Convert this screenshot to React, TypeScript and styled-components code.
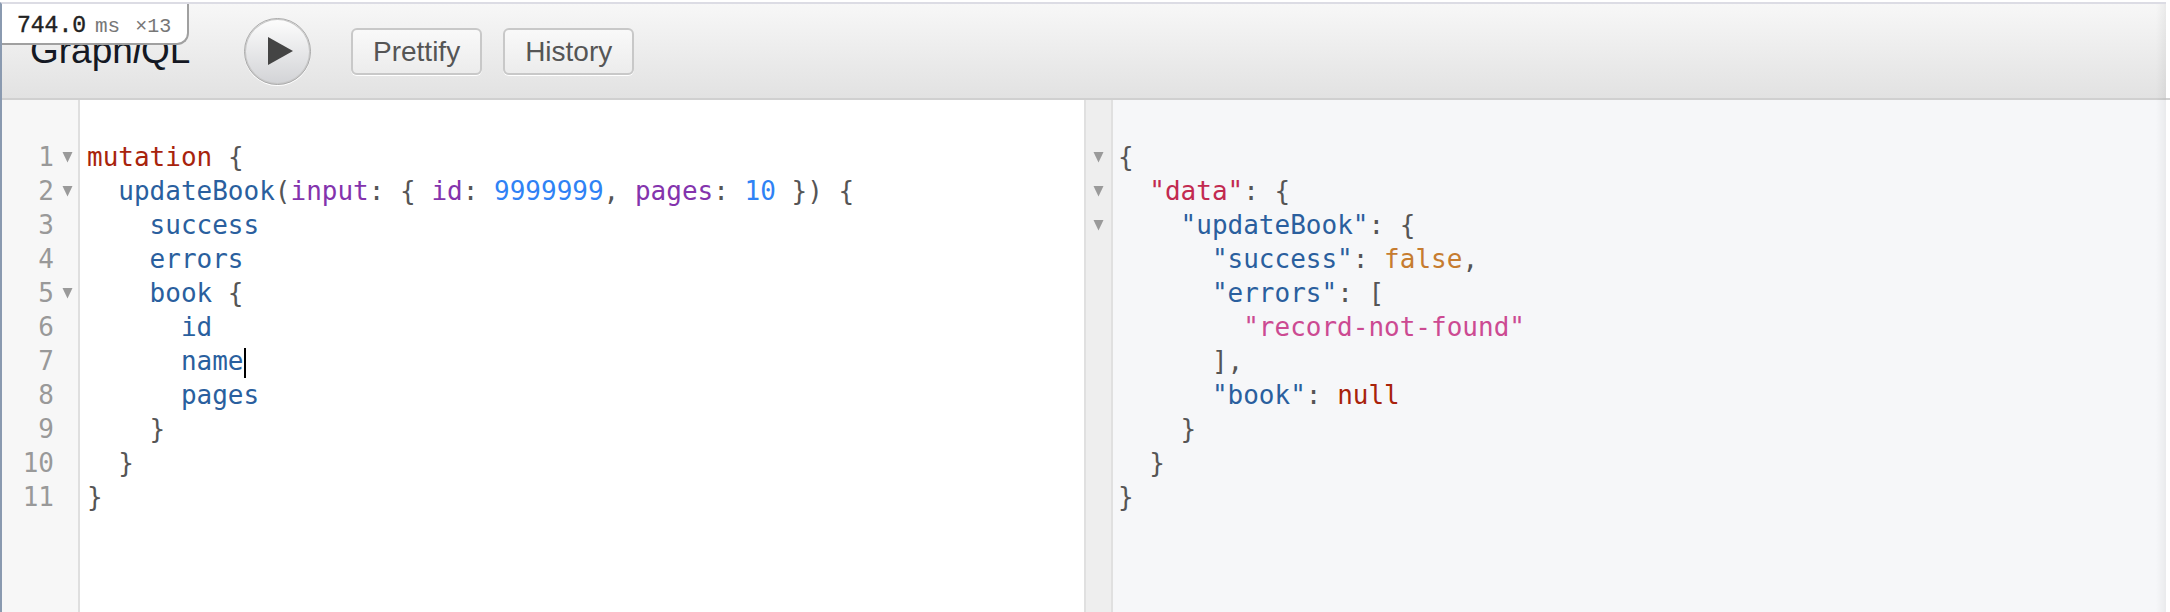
import styled, { createGlobalStyle } from "styled-components";

const GlobalStyle = createGlobalStyle`
  html, body {
    margin: 0;
    height: 100%;
    background: #fff;
    overflow: hidden;
  }
  #root {
    height: 100%;
  }
`;

const tokenColors: Record<string, string> = {
  keyword: "#a8230c",
  field: "#2a5f9e",
  arg: "#8433ad",
  number: "#2f82f5",
  punct: "#555",
  jsonKey: "#c22a50",
  boolean: "#c67c30",
  string: "#cc4a92",
};

type Token = [keyof typeof tokenColors, string];

const queryLines: { indent: number; tokens: Token[]; fold?: boolean; cursor?: boolean }[] = [
  { indent: 0, fold: true, tokens: [["keyword", "mutation"], ["punct", " {"]] },
  {
    indent: 1,
    fold: true,
    tokens: [
      ["field", "updateBook"],
      ["punct", "("],
      ["arg", "input"],
      ["punct", ": { "],
      ["arg", "id"],
      ["punct", ": "],
      ["number", "9999999"],
      ["punct", ", "],
      ["arg", "pages"],
      ["punct", ": "],
      ["number", "10"],
      ["punct", " }) {"],
    ],
  },
  { indent: 2, tokens: [["field", "success"]] },
  { indent: 2, tokens: [["field", "errors"]] },
  { indent: 2, fold: true, tokens: [["field", "book"], ["punct", " {"]] },
  { indent: 3, tokens: [["field", "id"]] },
  { indent: 3, cursor: true, tokens: [["field", "name"]] },
  { indent: 3, tokens: [["field", "pages"]] },
  { indent: 2, tokens: [["punct", "}"]] },
  { indent: 1, tokens: [["punct", "}"]] },
  { indent: 0, tokens: [["punct", "}"]] },
];

const resultLines: { indent: number; tokens: Token[]; fold?: boolean }[] = [
  { indent: 0, fold: true, tokens: [["punct", "{"]] },
  { indent: 1, fold: true, tokens: [["jsonKey", "\"data\""], ["punct", ": {"]] },
  { indent: 2, fold: true, tokens: [["field", "\"updateBook\""], ["punct", ": {"]] },
  { indent: 3, tokens: [["field", "\"success\""], ["punct", ": "], ["boolean", "false"], ["punct", ","]] },
  { indent: 3, tokens: [["field", "\"errors\""], ["punct", ": ["]] },
  { indent: 4, tokens: [["string", "\"record-not-found\""]] },
  { indent: 3, tokens: [["punct", "],"]] },
  { indent: 3, tokens: [["field", "\"book\""], ["punct", ": "], ["keyword", "null"]] },
  { indent: 2, tokens: [["punct", "}"]] },
  { indent: 1, tokens: [["punct", "}"]] },
  { indent: 0, tokens: [["punct", "}"]] },
];

function FoldArrow() {
  return (
    <svg width="11" height="12" viewBox="0 0 11 12">
      <path d="M0.5 1 L10.5 1 L5.5 11.5 Z" fill="#9a9a9a" />
    </svg>
  );
}

function PlayIcon() {
  return (
    <svg width="25" height="28" viewBox="0 0 25 28">
      <path d="M0 0 L25 14 L0 28 Z" fill="#444" />
    </svg>
  );
}

export default function App() {
  return (
    <Page>
      <GlobalStyle />
      <Frame>
        <Stats>
          <StatsValue>744.0</StatsValue>
          <StatsUnit>ms</StatsUnit>
          <StatsCount>×13</StatsCount>
        </Stats>
        <Toolbar>
          <Title>
            Graph<em>i</em>QL
          </Title>
          <ExecuteButton aria-label="Execute">
            <PlayIcon />
          </ExecuteButton>
          <ToolButton>Prettify</ToolButton>
          <ToolButton>History</ToolButton>
        </Toolbar>
        <Panes>
          <QueryPane>
            <QueryGutter>
              {queryLines.map((line, i) => (
                <GutterRow key={i}>
                  <LineNumber>{i + 1}</LineNumber>
                  <FoldSlot>{line.fold && <FoldArrow />}</FoldSlot>
                </GutterRow>
              ))}
            </QueryGutter>
            <Code>
              {queryLines.map((line, i) => (
                <CodeLine key={i} $indent={line.indent}>
                  {line.tokens.map(([kind, text], j) => (
                    <Tok key={j} $kind={kind}>
                      {text}
                    </Tok>
                  ))}
                  {line.cursor && <Cursor />}
                </CodeLine>
              ))}
            </Code>
          </QueryPane>
          <ResultPane>
            <ResultGutter>
              {resultLines.map((line, i) => (
                <ResultGutterRow key={i}>{line.fold && <FoldArrow />}</ResultGutterRow>
              ))}
            </ResultGutter>
            <ResultCode>
              {resultLines.map((line, i) => (
                <CodeLine key={i} $indent={line.indent}>
                  {line.tokens.map(([kind, text], j) => (
                    <Tok key={j} $kind={kind}>
                      {text}
                    </Tok>
                  ))}
                </CodeLine>
              ))}
            </ResultCode>
          </ResultPane>
        </Panes>
      </Frame>
    </Page>
  );
}

const Page = styled.div`
  height: 612px;
  width: 2170px;
  box-sizing: border-box;
  padding-top: 2px;
  padding-right: 4px;
  background: #fff;
`;

const Frame = styled.div`
  position: relative;
  height: 100%;
  display: flex;
  flex-direction: column;
  border-top: 2px solid #dcdce4;
  border-left: 2px solid #8a9ab0;
  box-sizing: border-box;
  &::after {
    content: "";
    position: absolute;
    top: 0;
    right: 0;
    bottom: 0;
    width: 10px;
    background: linear-gradient(to right, rgba(0, 0, 0, 0), rgba(0, 0, 0, 0.05));
  }
`;

const Stats = styled.div`
  position: absolute;
  top: 0;
  left: 0;
  box-sizing: border-box;
  width: 187px;
  height: 41px;
  display: flex;
  align-items: baseline;
  padding: 9px 0 0 15px;
  background: #fff;
  border: solid #a0a0a0;
  border-width: 0 2px 2px 0;
  border-bottom-right-radius: 12px;
  font-family: "Liberation Mono", monospace;
  z-index: 2;
`;

const StatsValue = styled.span`
  font-size: 23px;
  color: #222;
  -webkit-text-stroke: 0.4px #222;
`;

const StatsUnit = styled.span`
  font-size: 21px;
  color: #777;
  margin-left: 9px;
`;

const StatsCount = styled.span`
  font-size: 20px;
  color: #777;
  margin-left: 15px;
`;

const Toolbar = styled.div`
  position: relative;
  height: 96px;
  flex: none;
  box-sizing: border-box;
  display: flex;
  align-items: center;
  padding-left: 28px;
  background: linear-gradient(#f7f7f7, #e2e2e2);
  border-bottom: 2px solid #d0d0d0;
  &::after {
    content: "";
    position: absolute;
    right: -4px;
    bottom: -2px;
    width: 4px;
    height: 2px;
    background: #d0d0d0;
  }
`;

const Title = styled.div`
  width: 214px;
  flex: none;
  font-family: "Liberation Sans", sans-serif;
  font-size: 37px;
  color: #141823;
`;

const ExecuteButton = styled.button`
  width: 67px;
  height: 67px;
  flex: none;
  padding: 0 0 0 6px;
  margin-right: 40px;
  border-radius: 50%;
  border: 1px solid #aaa;
  box-shadow: inset 0 0 0 1px #c8c8c8, 0 1px 0 #fff;
  background: linear-gradient(#fdfdfd, #d2d3d6);
  display: flex;
  align-items: center;
  justify-content: center;
`;

const ToolButton = styled.button`
  height: 47px;
  margin-right: 21px;
  margin-top: 1px;
  padding: 0 20px;
  border: 2px solid #c8c8c8;
  border-radius: 6px;
  box-shadow: 0 1px 0 #fff;
  background: linear-gradient(#f9f9f9, #ececec);
  font-family: "Liberation Sans", sans-serif;
  font-size: 28px;
  color: #555;
`;

const Panes = styled.div`
  flex: 1;
  display: flex;
  min-height: 0;
`;

const QueryPane = styled.div`
  width: 1082px;
  flex: none;
  display: flex;
  background: #fff;
`;

const ResultPane = styled.div`
  flex: 1;
  display: flex;
  background: #f6f7f9;
  border-left: 2px solid #e0e0e0;
`;

const QueryGutter = styled.div`
  width: 76px;
  flex: none;
  padding-top: 40px;
  background: #f7f7f7;
  border-right: 2px solid #dfdfdf;
`;

const ResultGutter = styled.div`
  width: 25px;
  flex: none;
  padding-top: 40px;
  background: #eeeeee;
  border-right: 2px solid #e0e0e0;
`;

const GutterRow = styled.div`
  height: 34px;
  display: flex;
  align-items: center;
  justify-content: flex-end;
`;

const ResultGutterRow = styled.div`
  height: 34px;
  display: flex;
  align-items: center;
  justify-content: center;
`;

const LineNumber = styled.span`
  font-family: "DejaVu Sans Mono", monospace;
  font-size: 26px;
  color: #999;
`;

const FoldSlot = styled.span`
  width: 24px;
  padding-right: 5px;
  box-sizing: border-box;
  display: flex;
  justify-content: flex-end;
`;

const Code = styled.div`
  flex: 1;
  padding: 40px 0 0 7px;
  font-family: "DejaVu Sans Mono", monospace;
  font-size: 26px;
`;

const ResultCode = styled(Code)`
  padding-left: 5px;
`;

const CodeLine = styled.div<{ $indent: number }>`
  height: 34px;
  line-height: 34px;
  white-space: pre;
  padding-left: ${p => p.$indent * 31.3}px;
`;

const Tok = styled.span<{ $kind: string }>`
  color: ${p => tokenColors[p.$kind]};
`;

const Cursor = styled.span`
  display: inline-block;
  width: 2px;
  height: 30px;
  background: #000;
  vertical-align: middle;
`;
